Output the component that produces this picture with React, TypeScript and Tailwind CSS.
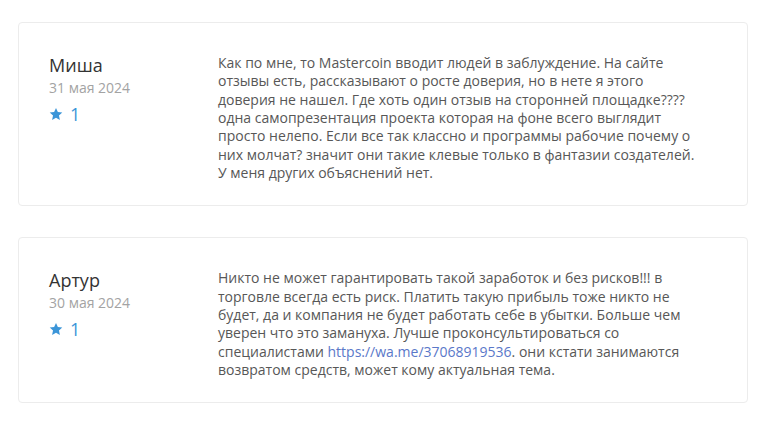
import React from "react";

type Review = {
  name: string;
  date: string;
  votes: number;
  body: React.ReactNode;
};

const reviews: Review[] = [
  {
    name: "Миша",
    date: "31 мая 2024",
    votes: 1,
    body: (
      <>
        Как по мне, то Mastercoin вводит людей в заблуждение. На сайте отзывы есть, рассказывают о росте доверия, но в нете я этого доверия не нашел. Где хоть один отзыв на сторонней площадке???? одна самопрезентация проекта которая на фоне всего выглядит просто нелепо. Если все так классно и программы рабочие почему о них молчат? значит они такие клевые только в фантазии создателей. У меня других объяснений нет.
      </>
    ),
  },
  {
    name: "Артур",
    date: "30 мая 2024",
    votes: 1,
    body: (
      <>
        Никто не может гарантировать такой заработок и без рисков!!! в торговле всегда есть риск. Платить такую прибыль тоже никто не будет, да и компания не будет работать себе в убытки. Больше чем уверен что это замануха. Лучше проконсультироваться со специалистами{" "}
        <a href="#" className="text-[#5a78c9]">https://wa.me/37068919536</a>. они кстати занимаются возвратом средств, может кому актуальная тема.
      </>
    ),
  },
];

function Star() {
  return (
    <svg width="14" height="14" viewBox="0 0 24 24" className="block">
      <path
        d="M12 1.5l3.2 7.1 7.6.8-5.7 5.2 1.6 7.6L12 18.3l-6.7 3.9 1.6-7.6-5.7-5.2 7.6-.8z"
        fill="#3b95d8"
      />
    </svg>
  );
}

function Card({ r }: { r: Review }) {
  return (
    <div className="flex rounded-[4px] border border-[#ececec] bg-white pl-[30px] pr-[30px] pt-[30px] pb-[23px]">
      <div className="w-[169px] shrink-0">
        <div className="text-[18px] leading-[24px] text-[#333333]">{r.name}</div>
        <div className="mt-[1px] text-[14px] leading-[20px] text-[#a3a3a3]">{r.date}</div>
        <div className="mt-[4px] flex items-center gap-[7px] text-[18px] leading-[24px] text-[#3b95d8]">
          <Star />
          <span>{r.votes}</span>
        </div>
      </div>
      <p className="mt-[1px] w-[484px] text-[14px] leading-[18.33px] text-[#575757]">{r.body}</p>
    </div>
  );
}

export default function App() {
  return (
    <div
      className="min-h-[441px] w-[770px] bg-white pl-[18px] pr-[22px] pt-[22px]"
      style={{ fontFamily: '"Open Sans", "Noto Sans", sans-serif' }}
    >
      <div className="flex flex-col gap-[31px]">
        {reviews.map((r) => (
          <Card key={r.name} r={r} />
        ))}
      </div>
    </div>
  );
}
